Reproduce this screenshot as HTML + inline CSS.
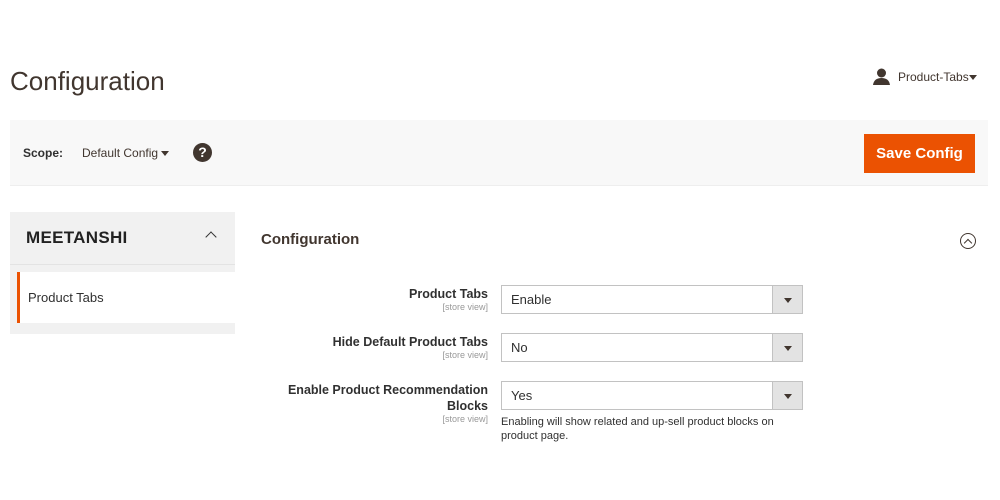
<!DOCTYPE html><html><head><style>
*{margin:0;padding:0;box-sizing:border-box}
body{width:1000px;height:500px;background:#fff;font-family:"Liberation Sans",sans-serif;color:#303030;position:relative;overflow:hidden}
.a{position:absolute}
.sel{position:absolute;left:501px;width:302px;height:29px;border:1px solid #c2c2c2;background:#fff;font-size:13px;padding:6px 9px}
.sel:after{content:"";position:absolute;right:0;top:0;width:29px;height:27px;background:#e3e3e3;border-left:1px solid #c2c2c2}
.sel i{position:absolute;right:10px;top:12px;border:4px solid transparent;border-top:5px solid #41362f;z-index:2;border-bottom:0}
.lb{position:absolute;right:512px;text-align:right;font-size:12.5px;font-weight:bold;color:#303030;line-height:16px}
.sv{font-size:9px;color:#999;font-weight:normal;display:block;line-height:11px}
</style></head><body>
<div class="a" style="left:10px;top:66px;font-size:26px;color:#41362f">Configuration</div>
<svg class="a" style="left:873px;top:68px" width="17" height="17" viewBox="0 0 17 17"><circle cx="8.5" cy="5" r="4.5" fill="#41362f"/><path d="M0 17 Q1 10 8.5 10 Q16 10 17 17Z" fill="#41362f"/></svg>
<div class="a" style="left:898px;top:70px;font-size:12px;color:#41362f">Product-Tabs</div>
<div class="a" style="left:969px;top:75px;border:4px solid transparent;border-top:5px solid #41362f;border-bottom:0"></div>
<div class="a" style="left:10px;top:120px;width:978px;height:66px;background:#f8f8f8;border-bottom:1px solid #eee"></div>
<div class="a" style="left:23px;top:146px;font-size:12px;font-weight:bold">Scope:</div>
<div class="a" style="left:82px;top:146px;font-size:12px;color:#41362f">Default Config</div>
<div class="a" style="left:161px;top:151px;border:4px solid transparent;border-top:5px solid #41362f;border-bottom:0"></div>
<div class="a" style="left:193px;top:143px;width:19px;height:19px;border-radius:50%;background:#41362f;color:#fff;font-size:14px;font-weight:bold;text-align:center;line-height:19px">?</div>
<div class="a" style="left:864px;top:134px;width:111px;height:39px;background:#eb5202;color:#fff;font-size:15px;font-weight:bold;text-align:center;line-height:39px">Save Config</div>
<div class="a" style="left:10px;top:212px;width:225px;height:122px;background:#f1f1f1"></div>
<div class="a" style="left:10px;top:264px;width:225px;height:1px;background:#e3e3e3"></div>
<div class="a" style="left:26px;top:228px;font-size:17px;font-weight:900;color:#222;letter-spacing:0.3px">MEETANSHI</div>
<div class="a" style="left:207px;top:233px;width:8px;height:8px;border-left:1.5px solid #333;border-top:1.5px solid #333;transform:rotate(45deg)"></div>
<div class="a" style="left:17px;top:272px;width:218px;height:51px;background:#fff;border-left:3px solid #eb5202"></div>
<div class="a" style="left:28px;top:290px;font-size:13px;color:#303030">Product Tabs</div>
<div class="a" style="left:261px;top:231px;font-size:15px;font-weight:bold;color:#41362f">Configuration</div>
<div class="a" style="left:960px;top:233px;width:16px;height:16px;border:1px solid #41362f;border-radius:50%"></div>
<div class="a" style="left:965px;top:240px;width:6px;height:6px;border-left:1px solid #41362f;border-top:1px solid #41362f;transform:rotate(45deg)"></div>
<div class="lb" style="top:286px">Product Tabs<span class="sv">[store view]</span></div>
<div class="sel" style="top:285px">Enable<i></i></div>
<div class="lb" style="top:334px">Hide Default Product Tabs<span class="sv">[store view]</span></div>
<div class="sel" style="top:333px">No<i></i></div>
<div class="lb" style="top:382px">Enable Product Recommendation<br>Blocks<span class="sv">[store view]</span></div>
<div class="sel" style="top:381px">Yes<i></i></div>
<div class="a" style="left:501px;top:415px;font-size:11px;line-height:14px;color:#303030;width:300px">Enabling will show related and up-sell product blocks on product page.</div>
</body></html>
